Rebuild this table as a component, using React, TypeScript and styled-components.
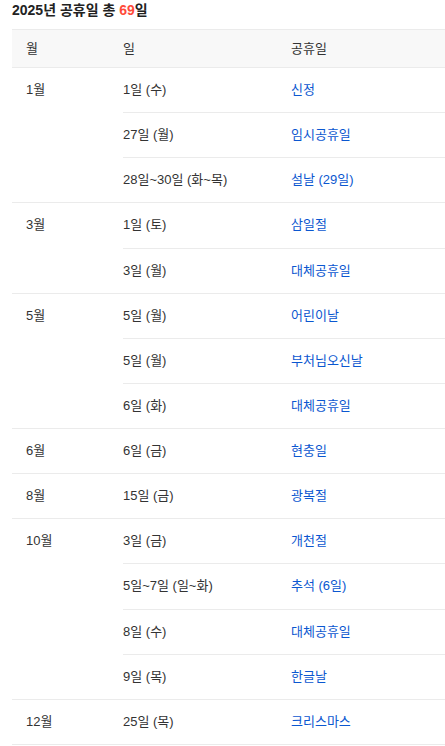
import React from 'react';
import styled, { createGlobalStyle } from 'styled-components';

type Holiday = { day: string; name: string };
type MonthGroup = { month: string; items: Holiday[] };

const holidays: MonthGroup[] = [
  {
    month: '1월',
    items: [
      { day: '1일 (수)', name: '신정' },
      { day: '27일 (월)', name: '임시공휴일' },
      { day: '28일~30일 (화~목)', name: '설날 (29일)' },
    ],
  },
  {
    month: '3월',
    items: [
      { day: '1일 (토)', name: '삼일절' },
      { day: '3일 (월)', name: '대체공휴일' },
    ],
  },
  {
    month: '5월',
    items: [
      { day: '5일 (월)', name: '어린이날' },
      { day: '5일 (월)', name: '부처님오신날' },
      { day: '6일 (화)', name: '대체공휴일' },
    ],
  },
  { month: '6월', items: [{ day: '6일 (금)', name: '현충일' }] },
  { month: '8월', items: [{ day: '15일 (금)', name: '광복절' }] },
  {
    month: '10월',
    items: [
      { day: '3일 (금)', name: '개천절' },
      { day: '5일~7일 (일~화)', name: '추석 (6일)' },
      { day: '8일 (수)', name: '대체공휴일' },
      { day: '9일 (목)', name: '한글날' },
    ],
  },
  { month: '12월', items: [{ day: '25일 (목)', name: '크리스마스' }] },
];

const GlobalStyle = createGlobalStyle`
  body {
    margin: 0;
    background: #fff;
    font-family: "Liberation Sans", "Noto Sans CJK KR", sans-serif;
    color: #333;
  }
`;

const App: React.FC = () => {
  return (
    <>
      <GlobalStyle />
      <Page>
        <Title>
          2025년 공휴일 총 <Count>69</Count>일
        </Title>
        <Table>
          <thead>
            <tr>
              <HeadCell $first>월</HeadCell>
              <HeadCell $width={168}>일</HeadCell>
              <HeadCell>공휴일</HeadCell>
            </tr>
          </thead>
          <tbody>
            {holidays.map((group) =>
              group.items.map((item, i) => (
                <tr key={group.month + i}>
                  {i === 0 && <MonthCell rowSpan={group.items.length}>{group.month}</MonthCell>}
                  <Cell>{item.day}</Cell>
                  <Cell $link>{item.name}</Cell>
                </tr>
              ))
            )}
          </tbody>
        </Table>
      </Page>
    </>
  );
};

export default App;

const Page = styled.div`
  padding-left: 12px;
`;

const Title = styled.h2`
  margin: 0 0 9px;
  font-size: 14px;
  line-height: 20px;
  font-weight: bold;
  color: #222;
`;

const Count = styled.span`
  color: #ff4b3a;
`;

const Table = styled.table`
  width: 100%;
  border-collapse: collapse;
  font-size: 13px;
  border-top: 1px solid #ebebeb;
`;

const HeadCell = styled.th<{ $first?: boolean; $width?: number }>`
  width: ${(p) => (p.$first ? '97px' : p.$width ? `${p.$width}px` : 'auto')};
  padding: 8px 0 8px ${(p) => (p.$first ? '14px' : '0')};
  line-height: 21px;
  text-align: left;
  font-weight: normal;
  color: #333;
  background: #f8f8f8;
  border-bottom: 1px solid #ebebeb;
`;

const MonthCell = styled.td`
  padding: 12px 0 12px 14px;
  line-height: 20.13px;
  vertical-align: top;
  border-bottom: 1px solid #ebebeb;
`;

const Cell = styled.td<{ $link?: boolean }>`
  padding: 12px 0;
  line-height: 20.13px;
  vertical-align: middle;
  color: ${(p) => (p.$link ? '#0b57d0' : '#333')};
  border-bottom: 1px solid #ebebeb;
`;
